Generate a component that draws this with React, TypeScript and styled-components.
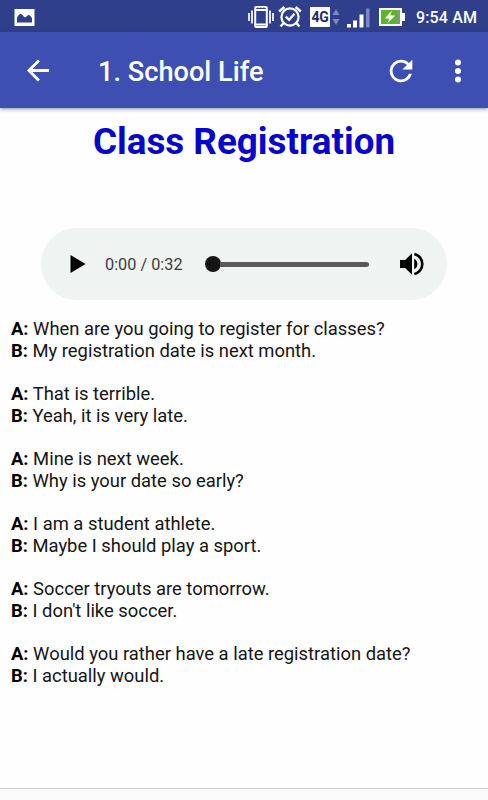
import React from "react";
import styled, { createGlobalStyle } from "styled-components";

const GlobalStyle = createGlobalStyle`
  * { box-sizing: border-box; }
  body { margin: 0; background: #fff; font-family: Roboto, sans-serif; }
  svg { display: block; flex: none; }
`;

const Screen = styled.div`
  width: 488px;
  height: 800px;
  display: flex;
  flex-direction: column;
  background: #fefefe;
  overflow: hidden;
`;

const StatusBar = styled.div`
  height: 32px;
  flex: none;
  display: flex;
  align-items: center;
  padding: 2px 11px 0 14px;
  background: #303f8b;
  color: #fff;
`;

const StatusIcons = styled.div`
  display: flex;
  align-items: center;
  margin-left: auto;
`;

const Slot = styled.div<{ $gap: number }>`
  margin-left: ${(p) => p.$gap}px;
`;

const NetworkBadge = styled.div`
  width: 20px;
  height: 20px;
  margin-left: 8px;
  background: #fff;
  color: #202c66;
  font-size: 14px;
  font-weight: 700;
  line-height: 21px;
  text-align: center;
  letter-spacing: -0.2px;
`;

const Clock = styled.div`
  width: 61px;
  margin: 2px 0 0 11px;
  font-size: 16px;
  font-weight: 500;
  line-height: 20px;
  letter-spacing: 0.15px;
  white-space: nowrap;
`;

const AppBar = styled.header`
  height: 76px;
  flex: none;
  display: flex;
  align-items: center;
  padding: 0 24px 0 22px;
  background: #3d50b2;
  color: #fff;
  box-shadow: 0 1px 4px rgba(40, 50, 110, 0.55);
`;

const BarTitle = styled.div`
  flex: 1;
  padding: 4px 0 0 44px;
  font-size: 27.2px;
  font-weight: 500;
  line-height: 34px;
  white-space: nowrap;
`;

const IconButton = styled.button`
  display: flex;
  padding: 0;
  border: 0;
  background: none;
  color: inherit;
`;

const Actions = styled.div`
  display: flex;
  align-items: center;
  gap: 34px;
  padding-top: 1px;
`;

const Content = styled.main`
  flex: 1;
  display: flex;
  flex-direction: column;
`;

const Heading = styled.h1`
  margin: 12px 0 0;
  font-size: 36.8px;
  font-weight: 700;
  line-height: 43px;
  text-align: center;
  color: #0505cc;
  white-space: nowrap;
`;

const Player = styled.div`
  width: 406px;
  height: 72px;
  margin: 65px 0 0 41px;
  padding: 0 22px 0 29px;
  display: flex;
  align-items: center;
  border-radius: 36px;
  background: #eff3f2;
`;

const PlayTime = styled.div`
  width: 119px;
  padding: 1px 0 0 19px;
  font-size: 16.3px;
  line-height: 20px;
  color: #3c3c3c;
  white-space: nowrap;
`;

const Seek = styled.div`
  width: 164px;
  height: 16px;
  display: flex;
  align-items: center;
`;

const Thumb = styled.div`
  width: 16px;
  height: 16px;
  border-radius: 50%;
  background: #151515;
`;

const Rail = styled.div`
  flex: 1;
  height: 5px;
  margin-left: -1px;
  border-radius: 0 3px 3px 0;
  background: #5a5a5a;
`;

const Volume = styled.div`
  margin-left: auto;
`;

const Dialogue = styled.div`
  display: flex;
  flex-direction: column;
  gap: 21.7px;
  padding: 18px 0 0 11px;
`;

const Exchange = styled.div`
  display: flex;
  flex-direction: column;
`;

const Line = styled.p`
  margin: 0;
  font-size: 18.4px;
  line-height: 21.7px;
  color: #151515;
  white-space: nowrap;
`;

const Speaker = styled.b`
  font-weight: 700;
  color: #000;
`;

const Footer = styled.footer`
  height: 12px;
  flex: none;
  border-top: 1px solid #d2d2d2;
  background: #fafafa;
`;

const exchanges = [
  ["When are you going to register for classes?", "My registration date is next month."],
  ["That is terrible.", "Yeah, it is very late."],
  ["Mine is next week.", "Why is your date so early?"],
  ["I am a student athlete.", "Maybe I should play a sport."],
  ["Soccer tryouts are tomorrow.", "I don't like soccer."],
  ["Would you rather have a late registration date?", "I actually would."],
];

const PhotoIcon = () => (
  <svg width="21" height="17" viewBox="0 0 21 17">
    <path fill="#fff" d="M.5 0h20v17H.5z" />
    <path fill="#303f8b" d="M3 13.5V8.5l2-2.8 1.6-1 2 1.2L10 8l1.6.3 2.6-2.2 1.6.2L18 9v4.5z" />
  </svg>
);

const VibrateIcon = () => (
  <svg width="26" height="24" viewBox="0 0 26 24" fill="none" stroke="#fff">
    <path strokeWidth="1.7" d="M1 8v8M4 5.5v13M22 5.5v13M25 8v8" />
    <rect x="7.2" y="2" width="11.6" height="20" rx=".8" strokeWidth="2" />
    <path strokeWidth="2" d="M7 5h12M7 19.5h12" />
    <path stroke="#303f8b" strokeWidth="1" d="M9 3h1.5M12 3h1.5M15 3h1.5" />
  </svg>
);

const AlarmIcon = () => (
  <svg width="24" height="24" viewBox="0 0 24 24" fill="none" stroke="#fff">
    <circle cx="12" cy="12" r="8.6" strokeWidth="2.2" />
    <path strokeWidth="2.3" d="m7.8 11.7 3.3 3.1 5.4-6" />
    <path strokeWidth="2.6" d="M1.2 6.5 6.4 2M22.8 6.5 17.6 2" />
    <path strokeWidth="2.4" d="m5.6 18-3 3.6M18.4 18l3 3.6" />
  </svg>
);

const DataArrows = () => (
  <svg width="8" height="18" viewBox="0 0 8 18" fill="#7f88bb">
    <path d="M4 1 7.5 7h-7zM4 17 .5 11h7z" />
  </svg>
);

const SignalIcon = () => (
  <svg width="23" height="22" viewBox="0 0 23 22" fill="#fff">
    <path d="M0 18h4v3.5H0zM6 14.5h4v7H6zM12.5 8.5h4v13h-4z" />
    <path fill="#7d88bd" d="M19 2.5h3.5v19H19z" />
  </svg>
);

const BatteryIcon = () => (
  <svg width="26" height="18" viewBox="0 0 26 18">
    <path fill="#fff" d="M0 0h23v5h3v8h-3v5H0z" />
    <path fill="#5cb62c" d="M2 2h16v14H2z" />
    <path fill="#819493" d="M18 2h3v14h-3z" />
    <path fill="#fff" d="m12.8 2.5-7 8h4.6L8.2 15.5l8.2-8h-5z" />
  </svg>
);

const BackIcon = () => (
  <svg width="32" height="32" viewBox="0 0 32 32" fill="none" stroke="currentColor" strokeWidth="2.8">
    <path d="M27 16.5H7M16.9 6.5l-10 10 10 10" />
  </svg>
);

const RefreshIcon = () => (
  <svg width="34" height="34" viewBox="0 0 24 24" fill="currentColor">
    <path d="M17.65 6.35A7.96 7.96 0 0 0 12 4a8 8 0 1 0 7.73 10h-2.08A6 6 0 1 1 12 6c1.66 0 3.14.69 4.22 1.78L13 11h7V4z" />
  </svg>
);

const MoreIcon = () => (
  <svg width="12" height="24" viewBox="0 0 12 24" fill="currentColor">
    <circle cx="6" cy="3.5" r="3" />
    <circle cx="6" cy="12" r="3" />
    <circle cx="6" cy="20.5" r="3" />
  </svg>
);

const PlayIcon = () => (
  <svg width="16" height="20" viewBox="0 0 16 20">
    <path d="M.5 1v18L15.5 10z" />
  </svg>
);

const VolumeIcon = () => (
  <svg width="26" height="26" viewBox="0 0 26 26">
    <path d="M1 9h5.2L13 2.2v21.6L6.2 17H1z" />
    <path d="M15.2 7.7a6 6 0 0 1 0 10.6z" />
    <path fill="none" stroke="#000" strokeWidth="2.6" d="M15.4 2.9a10.4 10.4 0 0 1 0 20.2" />
  </svg>
);

export default function App() {
  return (
    <>
      <GlobalStyle />
      <Screen>
        <StatusBar>
          <PhotoIcon />
          <StatusIcons>
            <VibrateIcon />
            <Slot $gap={4}><AlarmIcon /></Slot>
            <NetworkBadge>4G</NetworkBadge>
            <Slot $gap={2}><DataArrows /></Slot>
            <Slot $gap={7}><SignalIcon /></Slot>
            <Slot $gap={9}><BatteryIcon /></Slot>
            <Clock>9:54 AM</Clock>
          </StatusIcons>
        </StatusBar>
        <AppBar>
          <IconButton aria-label="Back"><BackIcon /></IconButton>
          <BarTitle>1. School Life</BarTitle>
          <Actions>
            <IconButton aria-label="Refresh"><RefreshIcon /></IconButton>
            <IconButton aria-label="More options"><MoreIcon /></IconButton>
          </Actions>
        </AppBar>
        <Content>
          <Heading>Class Registration</Heading>
          <Player>
            <PlayIcon />
            <PlayTime>0:00 / 0:32</PlayTime>
            <Seek>
              <Thumb />
              <Rail />
            </Seek>
            <Volume><VolumeIcon /></Volume>
          </Player>
          <Dialogue>
            {exchanges.map(([a, b]) => (
              <Exchange key={a}>
                <Line><Speaker>A:</Speaker> {a}</Line>
                <Line><Speaker>B:</Speaker> {b}</Line>
              </Exchange>
            ))}
          </Dialogue>
        </Content>
        <Footer />
      </Screen>
    </>
  );
}
